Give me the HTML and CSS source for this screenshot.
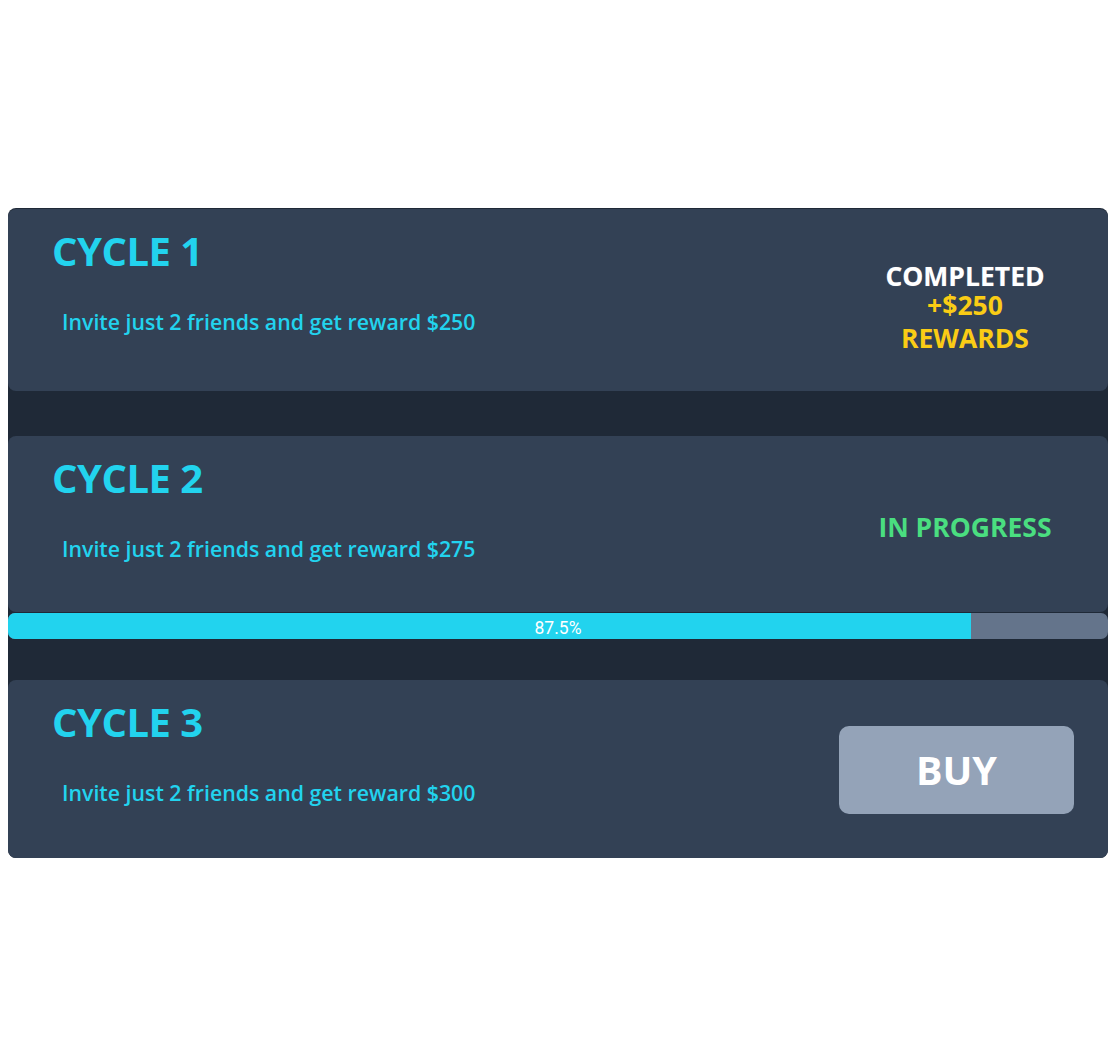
FILE: index.html
```html
<!DOCTYPE html>
<html lang="en">
<head>
<meta charset="utf-8">
<title>Cycles</title>
<link rel="stylesheet" href="styles.css">
</head>
<body>
<main class="cycles">
  <section class="cycle">
    <div class="card card-completed">
      <div class="info">
        <h2 class="title">CYCLE 1</h2>
        <p class="desc">Invite just 2 friends and get reward $250</p>
      </div>
      <div class="status status-completed">
        <div class="status-done">COMPLETED</div>
        <div class="status-amount">+$250</div>
        <div class="status-reward">REWARDS</div>
      </div>
    </div>
  </section>
  <section class="cycle">
    <div class="card">
      <div class="info">
        <h2 class="title">CYCLE 2</h2>
        <p class="desc">Invite just 2 friends and get reward $275</p>
      </div>
      <div class="status status-active">
        <div class="status-progress">IN PROGRESS</div>
      </div>
    </div>
    <div class="progress">
      <div class="progress-fill" style="width: 87.5%"></div>
      <span class="progress-label">87.5%</span>
    </div>
  </section>
  <section class="cycle">
    <div class="card card-buy">
      <div class="info">
        <h2 class="title">CYCLE 3</h2>
        <p class="desc">Invite just 2 friends and get reward $300</p>
      </div>
      <button class="buy" type="button">BUY</button>
    </div>
  </section>
</main>
</body>
</html>
```

FILE: styles.css
```css
html, body {
  background: #ffffff;
}
body {
  margin: 8px;
  font-family: "Open Sans", "Noto Sans", sans-serif;
}
.cycles {
  width: 1100px;
  margin-top: 200px;
  padding-top: 1px;
  background: #1f2937;
  border-radius: 8px;
  display: flex;
  flex-direction: column;
  gap: 45px;
}
.card {
  background: #334155;
  border-radius: 8px;
  display: flex;
  align-items: flex-start;
  justify-content: space-between;
  padding: 18px 34px 49px 44px;
}
.card-completed {
  padding-bottom: 38px;
}
.card-buy {
  padding-bottom: 44px;
}
.info {
  display: flex;
  flex-direction: column;
}
.title {
  margin: 0;
  font-size: 40px;
  line-height: 48px;
  font-weight: 700;
  color: #22d3ee;
  letter-spacing: -0.5px;
}
.desc {
  margin: 33px 0 0 10px;
  font-size: 21.3px;
  line-height: 28px;
  font-weight: 600;
  color: #22d3ee;
}
.status {
  width: 218px;
  text-align: center;
  font-weight: 700;
  font-size: 26.5px;
}
.status-completed {
  margin-top: 35px;
}
.status-active {
  margin-top: 57px;
}
.status-done {
  color: #ffffff;
  line-height: 29px;
  text-shadow: 0 0 1px rgba(255, 255, 255, 0.35);
}
.status-amount,
.status-reward {
  color: #facc15;
  line-height: 29px;
}
.status-reward {
  margin-top: 4px;
}
.status-progress {
  color: #4ade80;
  line-height: 32px;
}
.progress {
  position: relative;
  height: 26px;
  margin-top: 1px;
  margin-bottom: -4px;
  background: #64748b;
  border-radius: 7px;
  overflow: hidden;
}
.progress-fill {
  height: 100%;
  background: #22d3ee;
}
.progress-label {
  position: absolute;
  inset: 0;
  text-align: center;
  line-height: 30px;
  font-family: Roboto, "Liberation Sans", sans-serif;
  font-size: 17.5px;
  color: #ffffff;
}
.buy {
  width: 235px;
  height: 88px;
  margin-top: 28px;
  border: none;
  border-radius: 10px;
  background: #94a3b8;
  color: #ffffff;
  font-family: "Open Sans", "Noto Sans", sans-serif;
  font-size: 39.5px;
  font-weight: 700;
  padding: 0;
  cursor: pointer;
}
```
